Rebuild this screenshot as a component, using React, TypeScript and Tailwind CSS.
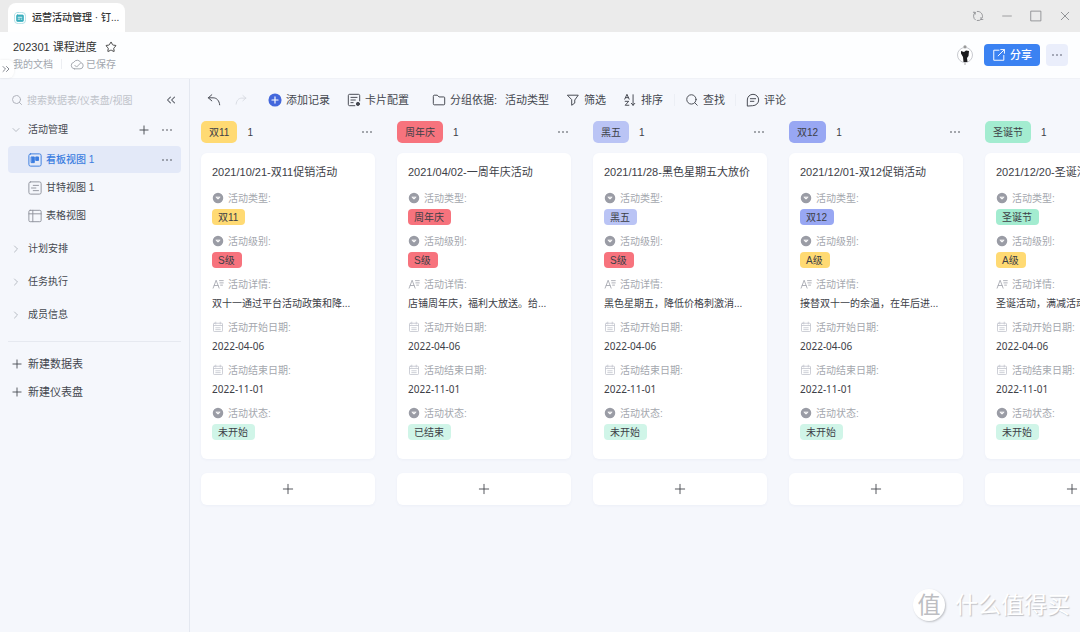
import { ReactNode, useState } from "react";
import {
  ChevronDown,
  ChevronRight,
  ChevronsLeft,
  ChevronsRight,
  Minus,
  Plus,
  Search,
  Square,
  Star,
  X,
} from "lucide-react";

type IconProps = { className?: string; children: ReactNode };

type Card = {
  group: string;
  color: string;
  title: string;
  level: string;
  levelColor: string;
  detail: string;
  status: string;
};

const YELLOW = "bg-[#ffda73]";
const RED = "bg-[#f7737d]";

const cards: Card[] = [
  {
    group: "双11",
    color: YELLOW,
    title: "2021/10/21-双11促销活动",
    level: "S级",
    levelColor: RED,
    detail: "双十一通过平台活动政策和降...",
    status: "未开始",
  },
  {
    group: "周年庆",
    color: RED,
    title: "2021/04/02-一周年庆活动",
    level: "S级",
    levelColor: RED,
    detail: "店铺周年庆，福利大放送。给...",
    status: "已结束",
  },
  {
    group: "黑五",
    color: "bg-[#bac4f5]",
    title: "2021/11/28-黑色星期五大放价",
    level: "S级",
    levelColor: RED,
    detail: "黑色星期五，降低价格刺激消...",
    status: "未开始",
  },
  {
    group: "双12",
    color: "bg-[#98a7f3]",
    title: "2021/12/01-双12促销活动",
    level: "A级",
    levelColor: YELLOW,
    detail: "接替双十一的余温，在年后进...",
    status: "未开始",
  },
  {
    group: "圣诞节",
    color: "bg-[#a3ecd0]",
    title: "2021/12/20-圣诞活动",
    level: "A级",
    levelColor: YELLOW,
    detail: "圣诞活动，满减活动",
    status: "未开始",
  },
];

function Icon({ className = "size-3.5", children }: IconProps) {
  return (
    <svg
      viewBox="0 0 16 16"
      fill="none"
      stroke="currentColor"
      strokeWidth="1.1"
      strokeLinecap="round"
      strokeLinejoin="round"
      className={`shrink-0 ${className}`}
      aria-hidden="true"
    >
      {children}
    </svg>
  );
}

function Dots() {
  return (
    <svg viewBox="0 0 12 4" fill="currentColor" className="h-1 w-3" aria-hidden="true">
      <circle cx="2" cy="2" r="0.8" />
      <circle cx="6" cy="2" r="0.8" />
      <circle cx="10" cy="2" r="0.8" />
    </svg>
  );
}

function SelectIcon() {
  return (
    <Icon className="size-3 text-[#9a9ca5]">
      <circle cx="8" cy="8" r="7" fill="currentColor" stroke="none" />
      <path d="M5.5 7.2l2.5 2.3 2.500-2.3z" fill="#fff" stroke="#fff" />
    </Icon>
  );
}

function TextIcon() {
  return (
    <Icon className="size-3 text-[#a0a3ab]">
      <path d="M1.5 13.5 5.5 3l4 10.5M3 10h5M10 3.5h5M10.5 6.5H15M11.5 9.5H14" />
    </Icon>
  );
}

function DateIcon() {
  return (
    <Icon className="size-3 text-[#c3c6ce]">
      <rect x="2" y="3" width="12" height="11" rx="1" />
      <path d="M2 6h12M5 1.5V4M11 1.5V4M5 9h6M5 11.5h6" />
    </Icon>
  );
}

function TitleBar() {
  return (
    <header className="flex h-8 items-end justify-between bg-[#ebebeb] pr-[9px] pl-2">
      <div className="flex h-[29px] items-center gap-1.5 rounded-t-lg bg-white px-1.5 text-[10px] font-medium text-[#333]">
        <Icon className="size-3 text-[#38aebd]">
          <rect x="0.5" y="0.5" width="15" height="15" rx="5" stroke="#a5dbe2" />
          <rect x="3.5" y="4" width="9" height="8.5" rx="1" fill="#38aebd" />
          <path d="M5.5 7h5M5.5 9.5h2M9.5 9.5h1" stroke="#fff" />
        </Icon>
        <span>运营活动管理 · 钉...</span>
      </div>
      <div className="flex h-full items-center gap-[17px] text-[#85878a]">
        <button type="button" aria-label="刷新">
          <Icon className="size-3">
            <path d="M4.5 13.2A6.2 6.2 0 0 1 4 3.4M7 1.9a6.2 6.2 0 0 1 6.8 8.2M12.6 12.2A6.2 6.2 0 0 1 7 14.1M1.8 3h2.5v2.5M14.5 12.5H12V10" />
          </Icon>
        </button>
        <button type="button" aria-label="最小化">
          <Minus className="size-3 scale-125" strokeWidth={1.2} />
        </button>
        <button type="button" aria-label="最大化">
          <Icon className="size-3">
            <rect x="1.500" y="1.500" width="13" height="13" />
          </Icon>
        </button>
        <button type="button" aria-label="关闭">
          <X className="size-3 scale-125" strokeWidth={1.4} />
        </button>
      </div>
    </header>
  );
}

function DocHeader() {
  return (
    <div className="relative flex h-[46px] items-center justify-between bg-[#fdfeff] pr-3 pl-[13px]">
      <div className="flex flex-col">
        <div className="flex h-[18px] items-center gap-2 text-[11px] text-[#333]">
          <h1>202301 课程进度</h1>
          <button type="button" aria-label="收藏">
            <Star className="size-3" strokeWidth={1.8} />
          </button>
        </div>
        <div className="flex h-4 items-center text-[10px] text-[#a3a7ae]">
          <a href="#docs">我的文档</a>
          <span className="mr-2 ml-2 h-2.5 w-px bg-[#eceef2]" />
          <Icon className="size-3.5">
            <path d="M5 13.5h6.5a3.6 3.6 0 0 0 .8-7.1A4.4 4.4 0 0 0 4.4 6 3.8 3.8 0 0 0 5 13.5zM5.5 9.5l2 2L12 7" />
          </Icon>
          <span className="ml-0.5">已保存</span>
        </div>
      </div>
      <div className="flex items-center gap-1.5">
        <svg viewBox="0 0 18 22" className="mr-1 h-[22px] w-[18px]" aria-hidden="true">
          <circle cx="9" cy="11" r="7.5" fill="#fff" stroke="#c9cbd0" />
          <circle cx="9" cy="2.8" r="1.6" fill="#999" />
          <path d="M5 7l3 1 2-1.5 3 .5-.5 5-1.5 2 .5 4H7.500l-.5-5L5 9.500z" fill="#1d1d1f" />
          <path d="M9 18.500v2.500" stroke="#aaa" />
        </svg>
        <button
          type="button"
          className="flex h-[22px] items-center gap-1 rounded bg-[#3b82f2] pr-2 pl-2 text-[11px] font-medium text-white"
        >
          <Icon>
            <path d="M8 2.500H2v11.500h11.500V8.500M7 9l7-7M10 1.800h4.200V6" />
          </Icon>
          分享
        </button>
        <button
          type="button"
          aria-label="更多"
          className="flex size-[22px] items-center justify-center rounded bg-[#eaeefb] text-[#4d5160]"
        >
          <Dots />
        </button>
      </div>
      <button
        type="button"
        aria-label="展开目录"
        className="absolute bottom-0 left-0 flex h-[18px] w-3.5 items-center rounded-r-md bg-white text-[#777b83] shadow-[0_0_3px_rgba(0,0,0,0.08)]"
      >
        <ChevronsRight className="size-3" strokeWidth={1.8} />
      </button>
    </div>
  );
}

function Sidebar() {
  const [view, setView] = useState("看板视图 1");

  const views = [
    {
      name: "看板视图 1",
      icon: (
        <>
          <rect x="1" y="1" width="14" height="14" rx="2" />
          <path d="M4 4.500h3.200v6.500H4zM9.200 4.500H12v4H9.200z" fill="currentColor" />
        </>
      ),
    },
    {
      name: "甘特视图 1",
      icon: (
        <>
          <rect x="1" y="1" width="14" height="14" rx="2" />
          <path d="M6 5h6M4 8h5M6 11h6" />
        </>
      ),
    },
    {
      name: "表格视图",
      icon: (
        <>
          <rect x="1" y="1.500" width="14" height="13" rx="1.500" />
          <path d="M1 5.500h14M5.500 1.500v13" />
        </>
      ),
    },
  ];

  return (
    <aside className="w-[190px] shrink-0 border-r border-[#e4e8f0] px-2 pt-2 text-[10px] text-[#44474f]">
      <div className="flex h-[26px] items-center gap-1 pr-[3px] pl-[3px]">
        <Search className="size-3 shrink-0 text-[#a9adb5]" strokeWidth={1.8} />
        <input
          type="search"
          aria-label="搜索"
          placeholder="搜索数据表/仪表盘/视图"
          className="min-w-0 flex-1 bg-transparent outline-none placeholder:text-[#bfc3ca]"
        />
        <button type="button" aria-label="收起" className="text-[#5c6069]">
          <ChevronsLeft className="size-3.5" strokeWidth={1.8} />
        </button>
      </div>

      <div className="flex h-[33px] items-center gap-1.5 pr-2 pl-0.5">
        <ChevronDown className="size-3 text-[#b0b4bc]" strokeWidth={1.8} />
        <span className="flex-1">活动管理</span>
        <button type="button" aria-label="添加视图">
          <Plus className="size-3.5" strokeWidth={1.6} />
        </button>
        <button type="button" aria-label="更多" className="ml-1">
          <Dots />
        </button>
      </div>

      <nav className="flex flex-col gap-px">
        {views.map((v) => {
          const active = v.name === view;
          return (
            <div
              key={v.name}
              className={`flex h-[27px] items-center pr-2 pl-5 ${active ? "rounded-sm bg-[#e3e9f8]" : ""}`}
            >
              <button
                type="button"
                onClick={() => setView(v.name)}
                className={`flex flex-1 items-center gap-1 ${active ? "font-medium text-[#3b7de0]" : ""}`}
              >
                <Icon className={active ? "size-3.5" : "size-3.5 text-[#92959e]"}>{v.icon}</Icon>
                {v.name}
              </button>
              {active && (
                <button type="button" aria-label="视图设置">
                  <Dots />
                </button>
              )}
            </div>
          );
        })}
      </nav>

      <div className="mt-[3px]">
        {["计划安排", "任务执行", "成员信息"].map((name) => (
          <button key={name} type="button" className="flex h-[33px] w-full items-center gap-1.5 pl-0.5">
            <ChevronRight className="size-3 text-[#b0b4bc]" strokeWidth={1.8} />
            {name}
          </button>
        ))}
      </div>

      <div className="mt-2.5 border-t border-[#e6e9f0] pt-2 text-[11px]">
        {["新建数据表", "新建仪表盘"].map((name) => (
          <button key={name} type="button" className="flex h-7 w-full items-center gap-1 pl-0.5">
            <Plus className="size-3.5" strokeWidth={1.5} />
            {name}
          </button>
        ))}
      </div>
    </aside>
  );
}

function Tool({ icon, children }: { icon: ReactNode; children: ReactNode }) {
  return (
    <button type="button" className="flex shrink-0 items-center gap-1">
      {icon}
      {children}
    </button>
  );
}

function Toolbar() {
  return (
    <div className="flex h-[42px] items-center pl-[17px] text-[11px] text-[#44474f]">
      <button type="button" aria-label="撤销">
        <Icon>
          <path d="M5.500 2 1.500 5.500l4 3.500M1.500 5.500H7c4 0 7 3 7.500 8" />
        </Icon>
      </button>
      <button type="button" aria-label="重做" className="ml-3.5 text-[#d5d8de]">
        <Icon className="size-3">
          <path d="M10.500 2l4 3.500-4 3.500M14.500 5.500H9c-4 0-7 3-7.500 8" />
        </Icon>
      </button>
      <div className="ml-[21px] flex items-center gap-[17px]">
        <Tool
          icon={
            <Icon>
              <circle cx="8" cy="8" r="7.500" fill="#4468dc" stroke="none" />
              <path d="M8 4.500v7M4.500 8h7" stroke="#fff" strokeWidth="1.300" />
            </Icon>
          }
        >
          添加记录
        </Tool>
        <Tool
          icon={
            <Icon>
              <path d="M9 14.500H3A1.500 1.500 0 0 1 1.500 13V3A1.500 1.500 0 0 1 3 1.500h10A1.500 1.500 0 0 1 14.500 3v6M4.500 5h7M4.500 8h5M4.500 11H7" />
              <circle cx="12.500" cy="12.500" r="1.800" fill="currentColor" />
            </Icon>
          }
        >
          卡片配置
        </Tool>
        <div className="ml-1.5">
          <Tool
            icon={
              <Icon>
                <path d="M1.500 3.500a1 1 0 0 1 1-1h3.500l2 2h5.500a1 1 0 0 1 1 1v7a1 1 0 0 1-1 1h-11a1 1 0 0 1-1-1z" />
              </Icon>
            }
          >
            分组依据:<span className="ml-1">活动类型</span>
          </Tool>
        </div>
        <Tool
          icon={
            <Icon>
              <path d="M2 2.500h12L10 8v3.500l-3.500 2.500V8z" />
            </Icon>
          }
        >
          筛选
        </Tool>
        <Tool
          icon={
            <Icon>
              <path d="M2 7l2.500-5.500L7 7M2.800 5.300h3.400M2.500 9.500h4l-4 4.500h4.200M11.500 2v12M9.500 11.800l2 2.200 2-2.200" />
            </Icon>
          }
        >
          排序
        </Tool>
      </div>
      <div className="ml-[11px] flex items-center gap-2.5">
        <span className="h-3 w-px bg-[#eceff5]" />
        <Tool icon={<Search className="size-3.5" strokeWidth={1.6} />}>查找</Tool>
        <span className="h-3 w-px bg-[#eceff5]" />
        <Tool
          icon={
            <Icon>
              <path d="M1.500 14.500V8A6.500 6.500 0 1 1 8 14.500zM5 6.500h6M5 9.500h4" />
            </Icon>
          }
        >
          评论
        </Tool>
      </div>
    </div>
  );
}

function Field({ icon, label, children }: { icon: ReactNode; label: string; children: ReactNode }) {
  return (
    <div>
      <dt className="flex h-4 items-center gap-1 text-[#a4a7ae]">
        {icon}
        {label}:
      </dt>
      <dd className="mt-[3px] flex h-4 items-center whitespace-nowrap">{children}</dd>
    </div>
  );
}

function Tag({ color, children }: { color: string; children: ReactNode }) {
  return <span className={`flex h-4 items-center rounded-sm pr-[7px] pl-1.5 ${color}`}>{children}</span>;
}

function Column({ card }: { card: Card }) {
  return (
    <section className="w-[174px] shrink-0 text-[10px] text-[#3d4047]">
      <div className="flex h-[22px] items-center pr-0.5">
        <h2 className={`flex h-[22px] items-center rounded-[5px] px-2 ${card.color}`}>{card.group}</h2>
        <span className="ml-2.5 flex-1">1</span>
        <button type="button" aria-label="更多">
          <Dots />
        </button>
      </div>

      <article className="mt-2.5 overflow-hidden rounded-md bg-white px-[11px] pt-[11px] pb-[19px] shadow-[0_1px_3px_rgba(80,100,150,0.05)]">
        <h3 className="h-4 text-[11px] leading-4 whitespace-nowrap">{card.title}</h3>
        <dl className="mt-2.5 flex flex-col gap-2">
          <Field icon={<SelectIcon />} label="活动类型">
            <Tag color={card.color}>{card.group}</Tag>
          </Field>
          <Field icon={<SelectIcon />} label="活动级别">
            <Tag color={card.levelColor}>{card.level}</Tag>
          </Field>
          <Field icon={<TextIcon />} label="活动详情">
            {card.detail}
          </Field>
          <Field icon={<DateIcon />} label="活动开始日期">
            <span className="font-['Noto_Sans',sans-serif]">2022-04-06</span>
          </Field>
          <Field icon={<DateIcon />} label="活动结束日期">
            <span className="font-['Noto_Sans',sans-serif]">2022-11-01</span>
          </Field>
          <Field icon={<SelectIcon />} label="活动状态">
            <Tag color="bg-[#d0f5e8]">{card.status}</Tag>
          </Field>
        </dl>
      </article>

      <button
        type="button"
        aria-label="添加卡片"
        className="mt-3.5 flex h-8 w-full items-center justify-center rounded-md bg-white shadow-[0_1px_3px_rgba(80,100,150,0.05)]"
      >
        <Plus className="size-4" strokeWidth={1.3} />
      </button>
    </section>
  );
}

export default function App() {
  return (
    <div className="relative flex min-h-screen flex-col bg-[#f5f7fc] font-['Liberation_Sans','Noto_Sans_CJK_SC',sans-serif]">
      <TitleBar />
      <DocHeader />
      <div className="flex flex-1 border-t border-[#f0f2f7]">
        <Sidebar />
        <main className="min-w-0 flex-1">
          <Toolbar />
          <div className="flex gap-[22px] overflow-x-auto px-[11px] pb-2 [scrollbar-width:none]">
            {cards.map((card) => (
              <Column key={card.group} card={card} />
            ))}
          </div>
        </main>
      </div>

      {/* watermark */}
      <div className="pointer-events-none absolute right-2.5 bottom-2.5 flex items-center gap-2.5 text-[23px] text-white [text-shadow:1px_1px_1px_#bfc1c6]">
        <span className="flex size-8 items-center justify-center rounded-full bg-white text-[#bdbec2] shadow-[1px_1px_2px_#bfc1c6] [text-shadow:none]">
          值
        </span>
        <span>什么值得买</span>
      </div>
    </div>
  );
}
